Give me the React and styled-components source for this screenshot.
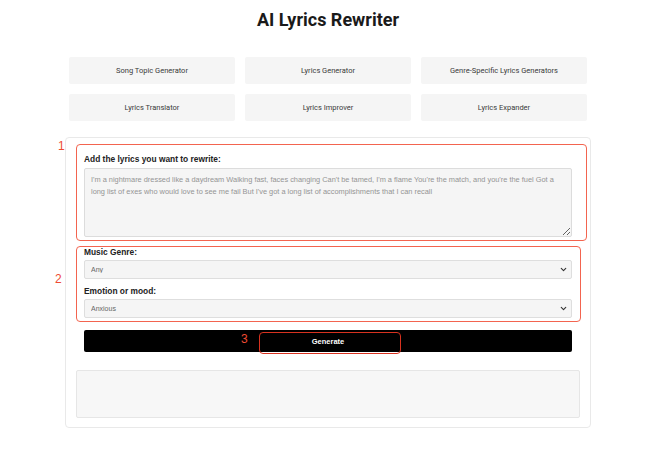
import styled, { createGlobalStyle } from 'styled-components'
import { ChevronDown } from 'lucide-react'

const GlobalStyle = createGlobalStyle`
  body {
    margin: 0;
    background: #ffffff;
    font-family: 'Liberation Sans', Arial, sans-serif;
  }
`

const Page = styled.div`
  width: 656px;
  padding-top: 7px;
`

const Title = styled.h1`
  margin: 0;
  text-align: center;
  font-family: Roboto, 'Liberation Sans', sans-serif;
  font-weight: 700;
  font-size: 18px;
  line-height: 26px;
  color: #1a1a1a;
`

const Wrapper = styled.div`
  width: 526px;
  margin: 0 auto;
`

const ToolGrid = styled.div`
  display: grid;
  grid-template-columns: repeat(3, 1fr);
  gap: 10px;
  padding: 0 4px;
  margin-top: 24px;
`

const ToolButton = styled.div`
  height: 27px;
  display: flex;
  align-items: center;
  justify-content: center;
  background: #f5f5f5;
  border-radius: 2px;
  font-family: Roboto, 'Liberation Sans', sans-serif;
  font-size: 7.5px;
  color: #3a3a3a;
`

const Card = styled.div`
  position: relative;
  margin-top: 16px;
  border: 1px solid #e9e9e9;
  border-radius: 4px;
  padding: 15px 10px 9px;
`

const Form = styled.div`
  display: flex;
  flex-direction: column;
  padding: 0 8px 0 8px;
`

const Group = styled.div`
  position: relative;
  display: flex;
  flex-direction: column;
  margin-top: ${({ $gap }) => $gap || 0}px;
`

const Label = styled.label`
  font-size: 8.4px;
  font-weight: 700;
  line-height: 12px;
  color: #222;
  margin-top: ${({ $gap }) => $gap || 0}px;
`

const TextArea = styled.textarea`
  display: block;
  margin-top: 3px;
  height: 69px;
  box-sizing: border-box;
  padding: 5px 16px 5px 6px;
  border: 1px solid #dcdcdc;
  border-radius: 2px;
  background: #f5f5f5;
  font-family: 'Liberation Sans', Arial, sans-serif;
  font-size: 7.4px;
  line-height: 12px;
  resize: vertical;
  &::placeholder {
    color: #949494;
  }
`

const SelectWrap = styled.div`
  position: relative;
  margin-top: 2px;
`

const Select = styled.select`
  display: block;
  appearance: none;
  width: 100%;
  height: 19px;
  box-sizing: border-box;
  padding: 0 6px;
  border: 1px solid #dedede;
  border-radius: 2px;
  background: #f5f5f5;
  font-family: 'Liberation Sans', Arial, sans-serif;
  font-size: 7px;
  color: #666;
`

const Chevron = styled(ChevronDown)`
  position: absolute;
  right: 4px;
  top: 5px;
  pointer-events: none;
  color: #333;
`

const GenerateButton = styled.button`
  margin-top: 12px;
  height: 22px;
  border: none;
  border-radius: 2px;
  background: #000;
  color: #fff;
  font-family: 'Liberation Sans', Arial, sans-serif;
  font-size: 7.5px;
  font-weight: 700;
`

const Output = styled.div`
  margin-top: 18px;
  height: 46px;
  border: 1px solid #e6e6e6;
  border-radius: 2px;
  background: #f7f7f7;
`

const Mark = styled.div`
  position: absolute;
  top: ${({ $top }) => $top}px;
  left: ${({ $left }) => $left}px;
  right: ${({ $right }) => $right}px;
  bottom: ${({ $bottom }) => $bottom}px;
  border: 1.5px solid ${({ $dark }) => ($dark ? '#d8321f' : '#f3644f')};
  border-radius: 4px;
  pointer-events: none;
`

const MarkNum = styled.span`
  position: absolute;
  top: ${({ $top }) => $top}px;
  left: ${({ $left }) => $left}px;
  font-family: 'Liberation Sans', Arial, sans-serif;
  font-size: 12px;
  line-height: 12px;
  color: #ee4a33;
`

const ButtonRow = styled.div`
  position: relative;
  display: flex;
  flex-direction: column;
`

const tools = [
  'Song Topic Generator',
  'Lyrics Generator',
  'Genre-Specific Lyrics Generators',
  'Lyrics Translator',
  'Lyrics Improver',
  'Lyrics Expander',
]

const lyrics =
  "I'm a nightmare dressed like a daydream Walking fast, faces changing Can't be tamed, I'm a flame You're the match, and you're the fuel Got a long list of exes who would love to see me fail But I've got a long list of accomplishments that I can recall"

const SelectField = ({ value }) => (
  <SelectWrap>
    <Select defaultValue={value}>
      <option>{value}</option>
    </Select>
    <Chevron size={9} strokeWidth={3} />
  </SelectWrap>
)

const App = () => (
  <Page>
    <GlobalStyle />
    <Title>AI Lyrics Rewriter</Title>
    <Wrapper>
      <ToolGrid>
        {tools.map((t) => (
          <ToolButton key={t}>{t}</ToolButton>
        ))}
      </ToolGrid>
      <Card>
        <Form>
          <Group>
            <Mark $top={-9} $left={-8} $right={-15} $bottom={-4} />
            <MarkNum $top={-13} $left={-26}>1</MarkNum>
            <Label>Add the lyrics you want to rewrite:</Label>
            <TextArea placeholder={lyrics} />
          </Group>
          <Group $gap={9}>
            <Mark $top={0} $left={-8} $right={-9} $bottom={-4} />
            <MarkNum $top={27} $left={-29}>2</MarkNum>
            <Label>Music Genre:</Label>
            <SelectField value="Any" />
            <Label $gap={6}>Emotion or mood:</Label>
            <SelectField value="Anxious" />
          </Group>
          <ButtonRow>
            <GenerateButton>Generate</GenerateButton>
            <Mark $dark $top={14} $left={175} $right={171} $bottom={-2} />
            <MarkNum $top={15} $left={157}>3</MarkNum>
          </ButtonRow>
        </Form>
        <Output />
      </Card>
    </Wrapper>
  </Page>
)

export default App
